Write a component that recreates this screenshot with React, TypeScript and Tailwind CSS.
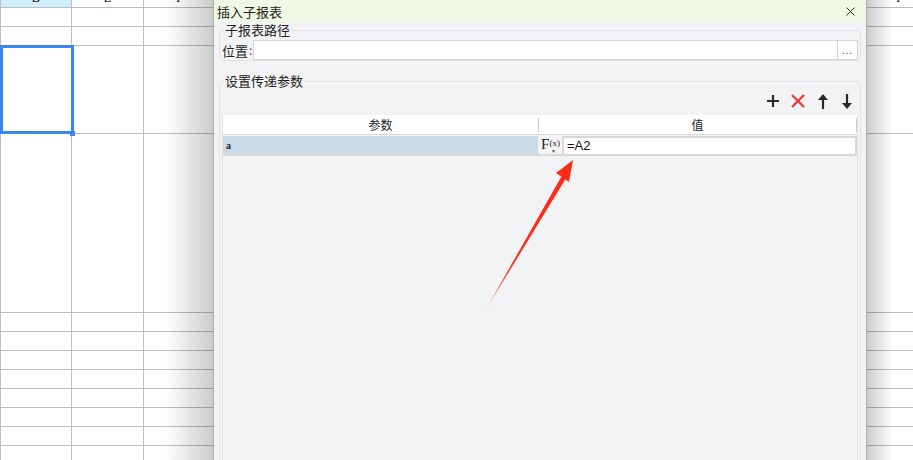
import { X } from "lucide-react";

const cols = ["D", "E", "F", "G", "H", "I", "J", "K", "L", "M", "N", "O", "P"];
const rowHeights = [19, 19, 88, 179, 19, 19, 19, 19, 19, 19, 19, 19];

const cjk = { fontFamily: '"Noto Sans CJK SC", "Liberation Sans", sans-serif' };

const Sheet = () => (
  <div className="flex flex-col">
    <div className="flex">
      {cols.map((c, i) => (
        <div
          key={c}
          className={`h-[8px] w-[72px] shrink-0 overflow-hidden border-b border-r border-[#bdbdbd] text-center ${
            i === 0 ? "border-l bg-[#cdeefa]" : "bg-white"
          }`}
        >
          <span className="block -translate-y-[8px] font-['Liberation_Serif'] text-[12px] leading-[12px] text-black">{c}</span>
        </div>
      ))}
    </div>
    {rowHeights.map((h, r) => (
      <div key={r} className="flex" style={{ height: h }}>
        {cols.map((c, i) => (
          <div
            key={c}
            className={`w-[72px] shrink-0 border-b border-r border-[#bdbdbd] bg-white ${i === 0 ? "border-l" : ""}`}
          />
        ))}
      </div>
    ))}
  </div>
);

// toolbar glyphs: thick plus, red cross, filled-head arrows
const PlusIcon = () => (
  <svg width="14" height="14" viewBox="0 0 14 14">
    <path d="M7 1v12M1 7h12" stroke="#2a2a2a" strokeWidth="2.2" />
  </svg>
);

const CrossIcon = () => (
  <svg width="16" height="16" viewBox="0 0 16 16">
    <path d="M2 2l12 12M14 2L2 14" stroke="#ee3b35" strokeWidth="2.4" />
  </svg>
);

const UpIcon = () => (
  <svg width="14" height="15" viewBox="0 0 14 15">
    <path d="M7 0L12 6H2Z" fill="#2a2a2a" />
    <path d="M7 5v10" stroke="#2a2a2a" strokeWidth="2.2" />
  </svg>
);

const DownIcon = () => (
  <svg width="14" height="15" viewBox="0 0 14 15">
    <path d="M7 15L12 9H2Z" fill="#2a2a2a" />
    <path d="M7 0v10" stroke="#2a2a2a" strokeWidth="2.2" />
  </svg>
);

const Dialog = () => (
  <div className="absolute left-[213px] top-0 flex h-[470px] w-[654px] flex-col border-l border-r border-[#a9a9a9] bg-[#f3f3f5]" style={cjk}>
    <div className="flex h-[22px] items-center justify-between bg-[#eef8e2] pl-[3px] pr-[8px]">
      <span className="text-[13px] leading-none text-[#222]">插入子报表</span>
      <X className="h-[15px] w-[15px] text-[#222]" strokeWidth={1.5} />
    </div>

    <div className="relative mx-[5px] mt-[8px] h-[31px] rounded-[5px] border border-[#e2e2e4] pl-[2px] pr-[2px]">
      <span className="absolute -top-[9px] left-[4px] bg-[#f3f3f5] px-[1px] text-[13px] leading-[16px] text-[#222]">子报表路径</span>
      <div className="mt-[9px] flex items-center">
        <span className="text-[13px] leading-none text-[#222]">位置</span>
        <span className="ml-[1px] text-[12px] leading-none text-[#8a2a8a]">:</span>
        <div className="ml-[1px] h-[20px] flex-1 border border-[#d4d4d4] bg-white" />
        <div className="flex h-[20px] w-[20px] items-end justify-center border border-l-0 border-[#d4d4d4] bg-white pb-[4px] text-[9px] leading-none tracking-[1px] text-[#7a2a8a]">
          ...
        </div>
      </div>
    </div>

    <div className="relative mx-[5px] mt-[20px] flex flex-1 flex-col rounded-t-[5px] border border-b-0 border-[#e2e2e4] px-[2px]">
      <span className="absolute -top-[9px] left-[4px] bg-[#f3f3f5] px-[1px] text-[13px] leading-[16px] text-[#222]">设置传递参数</span>
      <div className="mt-[11px] flex h-[16px] items-center justify-end gap-[10px] pr-[4px]">
        <PlusIcon />
        <CrossIcon />
        <UpIcon />
        <DownIcon />
      </div>
      <div className="mt-[6px] flex flex-1 flex-col border-l border-r border-[#e2e2e4]">
        <div className="flex h-[20px] items-center border-b border-[#d8d8d8] bg-white text-[12px] text-[#222]">
          <div className="flex h-full w-[315px] items-center justify-center">参数</div>
          <div className="h-[14px] w-px bg-[#c8c8c8]" />
          <div className="flex h-full flex-1 items-center justify-center">值</div>
          <div className="h-[14px] w-px bg-[#c8c8c8]" />
        </div>
        <div className="mt-[1px] flex h-[20px] border-b-2 border-[#d8d8d8]">
          <div className="flex w-[315px] items-center bg-[#c9dbe8] pl-[3px] font-['Liberation_Serif'] text-[10px] font-bold text-[#222]">
            a
          </div>
          <div className="relative flex w-[24px] items-start justify-center bg-[#f4f4f4] pl-[1px] font-['Liberation_Serif'] leading-none text-[#222]">
            <span className="mt-[1px] text-[15px]">F</span>
            <span className="mt-[3px] text-[9px]">(x)</span>
            <span className="absolute bottom-[0px] right-[6px] text-[5px] leading-none text-[#444]">▼</span>
          </div>
          <div className="flex flex-1 items-center border-2 border-b-0 border-[#d8d8d8] bg-white pl-[3px] font-['Liberation_Sans'] text-[13px] text-[#111]">
            =A2
          </div>
        </div>
      </div>
    </div>
  </div>
);

const App = () => (
  <div className="relative h-[460px] w-[913px] overflow-hidden bg-white">
    <Sheet />
    <div className="absolute left-0 top-[45px] h-[89px] w-[74px] border-[3px] border-[#3a87ef]" />
    <div className="absolute left-[70px] top-[131px] h-[5px] w-[5px] bg-[#3a87ef]" />
    <div className="absolute left-[165px] top-0 h-[460px] w-[48px] bg-gradient-to-r from-transparent to-black/20" />
    <div className="absolute left-[867px] top-0 h-[460px] w-[26px] bg-gradient-to-r from-black/20 to-transparent" />
    <Dialog />
    <svg className="absolute left-0 top-0" width="913" height="460" viewBox="0 0 913 460">
      <defs>
        <linearGradient id="tail" x1="486" y1="312" x2="560" y2="180" gradientUnits="userSpaceOnUse">
          <stop offset="0" stopColor="#ff2a17" stopOpacity="0.2" />
          <stop offset="0.3" stopColor="#ff2a17" />
        </linearGradient>
      </defs>
      <polygon points="485,311 564,172 568,175" fill="url(#tail)" />
      <polygon points="573,160 569,182 562,177 556,173" fill="#ff2a17" />
    </svg>
  </div>
);

export default App;
